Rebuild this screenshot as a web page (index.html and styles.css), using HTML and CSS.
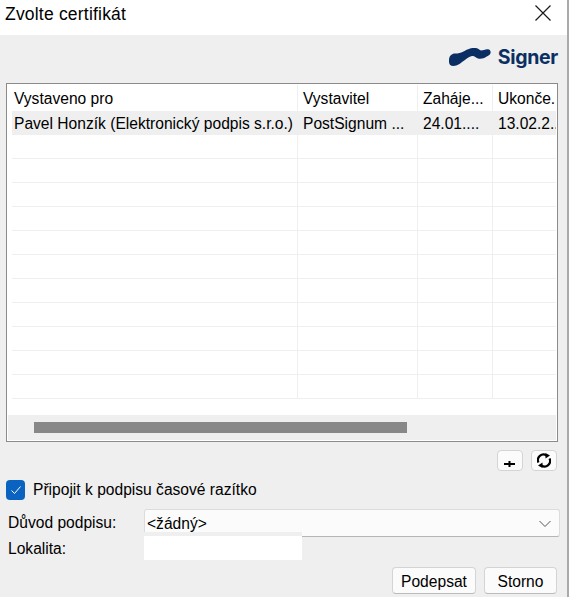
FILE: index.html
```html
<!DOCTYPE html>
<html lang="cs">
<head>
  <meta charset="UTF-8">
  <meta name="viewport" content="width=device-width, initial-scale=1.0">
  <title>Zvolte certifikát</title>
  <link rel="stylesheet" href="styles.css">
</head>
<body>

<div class="dialog">
  <div class="titlebar">
    <h1>Zvolte certifikát</h1>
    <svg class="close" width="16" height="16" viewBox="0 0 16 16"><path d="M0.5 0.5 15.5 15.5M15.5 0.5 0.5 15.5" stroke="#1a1a1a" stroke-width="1.2" fill="none"/></svg>
  </div>

  <div class="content">
    <div class="brand">
      <svg width="42" height="18" viewBox="0 0 42 18"><path d="M0 12.500C0 7.500 3 5.500 6 5.500C9 5.500 12 5 15.500 3C20 0.500 24 -0.500 27 0C29.500 0.500 30.500 2 32 2.500C34.500 2.500 37 0.500 40 1.500C42.500 3 42 6 39.500 7.500C36 10 32 11.500 29 10.500C26.500 9.500 25.500 7.500 23 8C19 9 14 13.500 10.500 16C7 18.200 3 18.500 1.200 17C0 15.800 0 14 0 12.500Z" fill="#0b2f63"/></svg>
      <span class="brand-name">Signer</span>
    </div>

    <div class="table-box">
      <div class="table-rows">
        <div class="row head">
          <div class="cell">Vystaveno pro</div>
          <div class="cell">Vystavitel</div>
          <div class="cell">Zaháje...</div>
          <div class="cell">Ukonče...</div>
        </div>
        <div class="row selected">
          <div class="cell">Pavel Honzík (Elektronický podpis s.r.o.)</div>
          <div class="cell">PostSignum ...</div>
          <div class="cell">24.01....</div>
          <div class="cell">13.02.2...</div>
        </div>
        <div class="row"><div class="cell"></div><div class="cell"></div><div class="cell"></div><div class="cell"></div></div>
        <div class="row"><div class="cell"></div><div class="cell"></div><div class="cell"></div><div class="cell"></div></div>
        <div class="row"><div class="cell"></div><div class="cell"></div><div class="cell"></div><div class="cell"></div></div>
        <div class="row"><div class="cell"></div><div class="cell"></div><div class="cell"></div><div class="cell"></div></div>
        <div class="row"><div class="cell"></div><div class="cell"></div><div class="cell"></div><div class="cell"></div></div>
        <div class="row"><div class="cell"></div><div class="cell"></div><div class="cell"></div><div class="cell"></div></div>
        <div class="row"><div class="cell"></div><div class="cell"></div><div class="cell"></div><div class="cell"></div></div>
        <div class="row"><div class="cell"></div><div class="cell"></div><div class="cell"></div><div class="cell"></div></div>
        <div class="row"><div class="cell"></div><div class="cell"></div><div class="cell"></div><div class="cell"></div></div>
        <div class="row"><div class="cell"></div><div class="cell"></div><div class="cell"></div><div class="cell"></div></div>
        <div class="row short"><div class="cell"></div><div class="cell"></div><div class="cell"></div><div class="cell"></div></div>
      </div>
      <div class="scrollbar"><div class="thumb"></div></div>
    </div>

    <div class="tools">
      <button class="tool"><svg class="plus" width="11" height="6" viewBox="0 0 11 6"><path d="M5.500 0V6M0 3H11" stroke="#000" stroke-width="2" fill="none"/></svg></button>
      <button class="tool"><svg width="14" height="15" viewBox="0 0 14 15"><path d="M1.500 9.500A5.500 5.500 0 0 1 9.500 2.500M12.500 5.500A5.500 5.500 0 0 1 4.500 12.500" stroke="#000" stroke-width="2.200" fill="none"/><path d="M8.500 0 13 2.500 8.500 5.500ZM5.500 15 1 12.500 5.500 9.500Z" fill="#000"/></svg></button>
    </div>

    <label class="check-row">
      <span class="checkbox"><svg width="12" height="12" viewBox="0 0 12 12"><path d="M1.500 6.500 4.500 9.500 10.500 2.500" stroke="#fff" stroke-width="1" fill="none"/></svg></span>
      Připojit k podpisu časové razítko
    </label>

    <div class="form">
      <div class="form-row reason">
        <span class="form-label">Důvod podpisu:</span>
        <div class="select">
          <span>&lt;žádný&gt;</span>
          <svg width="12" height="8" viewBox="0 0 12 8"><path d="M0.500 1 6 6.500 11.500 1" stroke="#555" stroke-width="1" fill="none"/></svg>
        </div>
      </div>
      <div class="form-row place">
        <span class="form-label">Lokalita:</span>
        <div class="place-input"></div>
      </div>
    </div>

    <div class="actions">
      <button class="btn btn-sign">Podepsat</button>
      <button class="btn btn-cancel">Storno</button>
    </div>
  </div>
</div>
<div class="backdrop"></div>

</body>
</html>
```

FILE: styles.css
```css
* {
  box-sizing: border-box;
}

html, body {
  margin: 0;
  height: 597px;
  overflow: hidden;
}

body {
  font-family: "Liberation Sans", Arial, sans-serif;
  font-size: 15.6px;
  color: #000;
  background-color: #efefef;
  display: flex;
}

.dialog {
  width: 567px;
  height: 597px;
  display: flex;
  flex-direction: column;
  flex: none;
}

.backdrop {
  flex: 1;
  background-color: #aaa;
}

.titlebar {
  height: 35px;
  background-color: #fff;
  display: flex;
  justify-content: space-between;
  align-items: center;
  padding: 0 16px 7px 5px;
  flex: none;
}

.titlebar h1 {
  margin: 0;
  font-size: 17.5px;
  font-weight: normal;
  letter-spacing: 0.2px;
}

.close {
  margin-bottom: 2px;
}

.content {
  flex: 1;
  padding: 0 9px 0 6px;
}

.brand {
  height: 48px;
  display: flex;
  justify-content: flex-end;
  align-items: center;
  gap: 7px;
  padding: 0 0 5px 0;
}

.brand-name {
  font-family: Inter, "Liberation Sans", sans-serif;
  font-size: 19.5px;
  font-weight: 700;
  letter-spacing: -0.3px;
  color: #0b2f63;
}

.table-box {
  width: 552px;
  height: 359px;
  border: 1px solid #8b8b8b;
  background-color: #fff;
  padding: 1px;
  display: flex;
  flex-direction: column;
}

.table-rows {
  height: 330px;
  overflow: hidden;
  flex: none;
}

.row {
  height: 24px;
  display: grid;
  grid-template-columns: 286px 120px 75px 65px;
  border-bottom: 1px solid #efefef;
  margin-left: 4px;
}

.row.head {
  height: 26px;
  grid-template-columns: 290px 120px 75px 65px;
  border-bottom: none;
  margin-left: 0;
}

.row.selected {
  background-color: #efefef;
}

.cell {
  padding: 4px 0 0 5px;
  border-right: 1px solid #efefef;
  white-space: nowrap;
  overflow: hidden;
}

.row.head .cell {
  padding-top: 5px;
}

.row .cell:first-child {
  padding-left: 2px;
}

.row.head .cell:first-child {
  padding-left: 6px;
}

.row .cell:last-child {
  border-right: none;
}

.scrollbar {
  flex: 1;
  background-color: #efefef;
  padding: 7px 0 0 26px;
}

.thumb {
  width: 373px;
  height: 11px;
  background-color: #888;
}

.tools {
  display: flex;
  justify-content: flex-end;
  gap: 8px;
  margin-top: 8px;
  padding-right: 1px;
}

.tool {
  width: 26px;
  height: 21px;
  padding: 0;
  border: 1px solid #d4d4d4;
  border-radius: 4px;
  background-color: #fbfbfb;
  display: flex;
  align-items: center;
  justify-content: center;
}

.plus {
  margin: 7px 2px 0 0;
}

.check-row {
  display: flex;
  align-items: center;
  gap: 8px;
  margin-top: 9px;
}

.checkbox {
  width: 19px;
  height: 20px;
  border-radius: 4px;
  background-color: #0a63c0;
  display: flex;
  align-items: center;
  justify-content: center;
}

.form {
  margin-top: 9px;
}

.form-row {
  display: flex;
  align-items: center;
}

.form-label {
  width: 138px;
  padding-left: 2px;
  flex: none;
}

.reason {
  height: 28px;
}

.select {
  width: 416px;
  height: 28px;
  padding: 2px 8px 0 2px;
  border: 1px solid #dcdcdc;
  border-bottom-color: #b5b5b5;
  border-radius: 3px;
  background-color: #fbfbfb;
  display: flex;
  justify-content: space-between;
  align-items: center;
  flex: none;
}

.place {
  height: 28px;
  margin-top: -5px;
}

.place .form-label {
  padding-top: 6px;
}

.place-input {
  width: 158px;
  height: 28px;
  background-color: #fff;
  border-top: 4px solid #efefef;
}

.actions {
  display: flex;
  justify-content: flex-end;
  gap: 8px;
  margin-top: 7px;
  padding-right: 1px;
}

.btn {
  height: 27px;
  padding: 2px 0 0;
  font-family: inherit;
  font-size: 15.6px;
  color: #000;
  border: 1px solid #d4d4d4;
  border-bottom-color: #bbb;
  border-radius: 4px;
  background-color: #fbfbfb;
}

.btn-sign {
  width: 84px;
}

.btn-cancel {
  width: 73px;
}
```
